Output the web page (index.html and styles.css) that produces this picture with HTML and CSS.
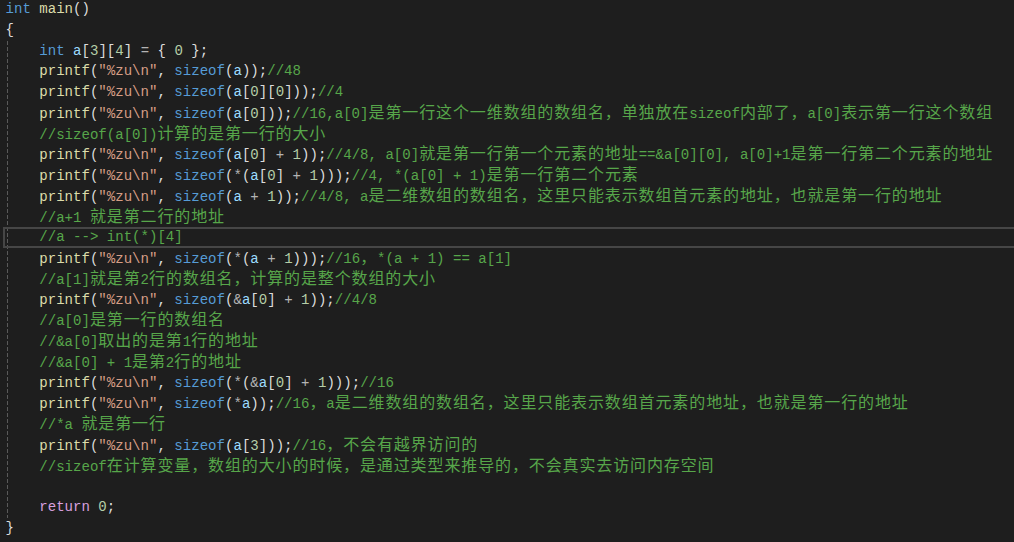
FILE: index.html
```html
<!DOCTYPE html>
<html lang="zh-CN">
<head>
<meta charset="utf-8">
<title>main.c</title>
<link rel="stylesheet" href="styles.css">
</head>
<body>
<div class="editor">
<div class="line"><span class="k">int</span> <span class="f">main</span>()</div>
<div class="line">{</div>
<div class="block">
<div class="line">    <span class="k">int</span> <span class="v">a</span>[<span class="n">3</span>][<span class="n">4</span>] <span class="o">=</span> { <span class="n">0</span> };</div>
<div class="line">    <span class="f">printf</span>(<span class="s">"%zu\n"</span>, <span class="k">sizeof</span>(<span class="v">a</span>));<span class="c">//48</span></div>
<div class="line">    <span class="f">printf</span>(<span class="s">"%zu\n"</span>, <span class="k">sizeof</span>(<span class="v">a</span>[<span class="n">0</span>][<span class="n">0</span>]));<span class="c">//4</span></div>
<div class="line">    <span class="f">printf</span>(<span class="s">"%zu\n"</span>, <span class="k">sizeof</span>(<span class="v">a</span>[<span class="n">0</span>]));<span class="c">//16,a[0]<span class="z">是第一行这个一维数组的数组名，单独放在</span>sizeof<span class="z">内部了，</span>a[0]<span class="z">表示第一行这个数组</span></span></div>
<div class="line">    <span class="c">//sizeof(a[0])<span class="z">计算的是第一行的大小</span></span></div>
<div class="line">    <span class="f">printf</span>(<span class="s">"%zu\n"</span>, <span class="k">sizeof</span>(<span class="v">a</span>[<span class="n">0</span>] <span class="o">+</span> <span class="n">1</span>));<span class="c">//4/8, a[0]<span class="z">就是第一行第一个元素的地址</span>==&amp;a[0][0], a[0]+1<span class="z">是第一行第二个元素的地址</span></span></div>
<div class="line">    <span class="f">printf</span>(<span class="s">"%zu\n"</span>, <span class="k">sizeof</span>(<span class="o">*</span>(<span class="v">a</span>[<span class="n">0</span>] <span class="o">+</span> <span class="n">1</span>)));<span class="c">//4, *(a[0] + 1)<span class="z">是第一行第二个元素</span></span></div>
<div class="line">    <span class="f">printf</span>(<span class="s">"%zu\n"</span>, <span class="k">sizeof</span>(<span class="v">a</span> <span class="o">+</span> <span class="n">1</span>));<span class="c">//4/8, a<span class="z">是二维数组的数组名，这里只能表示数组首元素的地址，也就是第一行的地址</span></span></div>
<div class="line">    <span class="c">//a+1 <span class="z">就是第二行的地址</span></span></div>
<div class="line current">    <span class="c">//a --&gt; int(*)[4]</span></div>
<div class="line">    <span class="f">printf</span>(<span class="s">"%zu\n"</span>, <span class="k">sizeof</span>(<span class="o">*</span>(<span class="v">a</span> <span class="o">+</span> <span class="n">1</span>)));<span class="c">//16<span class="z">，</span>*(a + 1) == a[1]</span></div>
<div class="line">    <span class="c">//a[1]<span class="z">就是第</span>2<span class="z">行的数组名，计算的是整个数组的大小</span></span></div>
<div class="line">    <span class="f">printf</span>(<span class="s">"%zu\n"</span>, <span class="k">sizeof</span>(<span class="o">&amp;</span><span class="v">a</span>[<span class="n">0</span>] <span class="o">+</span> <span class="n">1</span>));<span class="c">//4/8</span></div>
<div class="line">    <span class="c">//a[0]<span class="z">是第一行的数组名</span></span></div>
<div class="line">    <span class="c">//&amp;a[0]<span class="z">取出的是第</span>1<span class="z">行的地址</span></span></div>
<div class="line">    <span class="c">//&amp;a[0] + 1<span class="z">是第</span>2<span class="z">行的地址</span></span></div>
<div class="line">    <span class="f">printf</span>(<span class="s">"%zu\n"</span>, <span class="k">sizeof</span>(<span class="o">*</span>(<span class="o">&amp;</span><span class="v">a</span>[<span class="n">0</span>] <span class="o">+</span> <span class="n">1</span>)));<span class="c">//16</span></div>
<div class="line">    <span class="f">printf</span>(<span class="s">"%zu\n"</span>, <span class="k">sizeof</span>(<span class="o">*</span><span class="v">a</span>));<span class="c">//16<span class="z">，</span>a<span class="z">是二维数组的数组名，这里只能表示数组首元素的地址，也就是第一行的地址</span></span></div>
<div class="line">    <span class="c">//*a <span class="z">就是第一行</span></span></div>
<div class="line">    <span class="f">printf</span>(<span class="s">"%zu\n"</span>, <span class="k">sizeof</span>(<span class="v">a</span>[<span class="n">3</span>]));<span class="c">//16<span class="z">，不会有越界访问的</span></span></div>
<div class="line">    <span class="c">//sizeof<span class="z">在计算变量，数组的大小的时候，是通过类型来推导的，不会真实去访问内存空间</span></span></div>
<div class="line"> </div>
<div class="line">    <span class="r">return</span> <span class="n">0</span>;</div>
</div>
<div class="line">}</div>
</div>
</body>
</html>
```

FILE: styles.css
```css
html, body {
  margin: 0;
  padding: 0;
  background: #1e1e1e;
  overflow: hidden;
}

.editor {
  width: 1014px;
  height: 542px;
  margin-top: -1px;
  background: #1e1e1e;
  color: #dcdcdc;
  font-family: "Liberation Mono", "Noto Sans CJK SC", monospace;
  font-size: 14.07px;
  overflow: hidden;
}

.block {
  background-image: repeating-linear-gradient(to bottom, #5a5a5a 0 4px, transparent 4px 6px);
  background-repeat: no-repeat;
  background-position: 7px 0;
  background-size: 1px 100%;
}

.line {
  height: 20.76px;
  line-height: 20.76px;
  padding-left: 5.5px;
  white-space: pre;
  overflow: visible;
}

.line.current {
  margin-left: 3px;
  margin-right: -20px;
  padding-left: 2.5px;
  box-shadow: inset 0 0 0 2px #464646;
}

.z {
  font-family: "Noto Sans CJK SC", sans-serif;
  font-size: 16px;
  line-height: 1;
  letter-spacing: 0.88px;
}

.k { color: #569cd6; }
.f { color: #dcdcaa; }
.s { color: #d69d85; }
.c { color: #57a64a; }
.v { color: #9cdcfe; }
.n { color: #b5cea8; }
.o { color: #b4b4b4; }
.r { color: #d8a0df; }
```
